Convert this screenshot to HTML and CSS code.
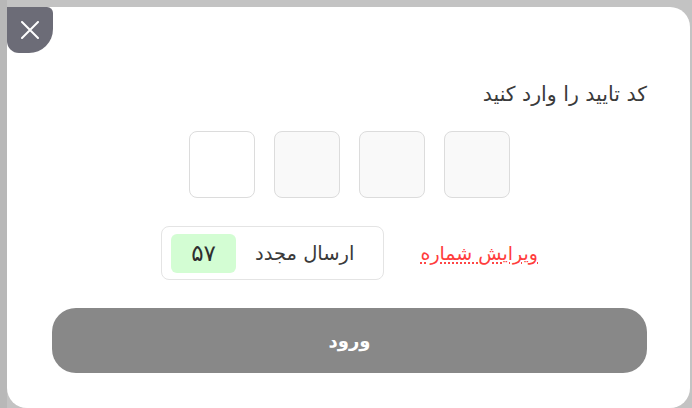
FILE: index.html
```html
<!DOCTYPE html>
<html lang="fa">
<head>
<meta charset="utf-8">
<title>ورود</title>
<link rel="stylesheet" href="styles.css">
</head>
<body>
<div class="page">
  <div class="modal">
    <button class="close" aria-label="بستن">
      <svg width="18" height="18" viewBox="0 0 18 18"><path d="M1 1 L17 17 M17 1 L1 17" stroke="#fff" stroke-width="2" stroke-linecap="round"/></svg>
    </button>
    <div class="content">
      <h2 class="title">کد تایید را وارد کنید</h2>
      <div class="otp">
        <input class="digit focus" type="text" maxlength="1">
        <input class="digit" type="text" maxlength="1">
        <input class="digit" type="text" maxlength="1">
        <input class="digit" type="text" maxlength="1">
      </div>
      <div class="actions">
        <a class="edit" href="#">ویرایش شماره</a>
        <div class="resend">
          <span class="resend-label">ارسال مجدد</span>
          <span class="timer">۵۷</span>
        </div>
      </div>
      <button class="submit">ورود</button>
    </div>
  </div>
</div>
</body>
</html>
```
FILE: styles.css
```css
* { box-sizing: border-box; }
html, body { margin: 0; padding: 0; }
body {
  background: #c3c3c3;
  font-family: "DejaVu Sans", "Noto Sans", sans-serif;
  width: 692px;
  height: 408px;
  overflow: hidden;
}
.page {
  padding: 7px 0 0 0;
  border-left: 7px solid #b8b8b8;
  height: 408px;
}
.modal {
  position: relative;
  background: #fff;
  width: 683px;
  height: 401px;
  border-radius: 0 20px 20px 20px;
}
.close {
  position: absolute;
  top: 0;
  left: 0;
  width: 46px;
  height: 46px;
  border: 0;
  padding: 0;
  background: #6c6c77;
  border-radius: 0 6px 24px 12px;
  display: flex;
  align-items: center;
  justify-content: center;
  cursor: pointer;
}
.content {
  direction: rtl;
  padding: 73px 43px 0 45px;
}
.title {
  margin: 0;
  font-size: 20.5px;
  line-height: 28px;
  font-weight: normal;
  color: #3a3a3a;
  text-align: right;
}
.otp {
  direction: ltr;
  display: flex;
  justify-content: center;
  gap: 19px;
  margin-top: 23px;
}
.digit {
  width: 66px;
  height: 67px;
  border: 1px solid #dcdcdc;
  border-radius: 8px;
  background: #f9f9f9;
  outline: none;
  text-align: center;
  font-size: 22px;
}
.digit.focus { background: #fff; }
.actions {
  display: flex;
  justify-content: center;
  align-items: center;
  gap: 36px;
  margin-top: 28px;
}
.edit {
  color: #ff3d3d;
  font-size: 19px;
  text-decoration: underline dotted #ff3d3d;
  text-underline-offset: 3px;
}
.resend {
  display: flex;
  align-items: center;
  gap: 19px;
  height: 54px;
  padding: 6px 29px 6px 9px;
  border: 1px solid #e4e4e4;
  border-radius: 8px;
}
.resend-label {
  font-size: 19.5px;
  color: #3a3a3a;
}
.timer {
  width: 65px;
  height: 39px;
  border-radius: 6px;
  background: #d3fdd3;
  display: flex;
  align-items: center;
  justify-content: center;
  font-size: 23px;
  color: #2e2e2e;
}
.submit {
  display: block;
  width: 100%;
  height: 65px;
  margin-top: 28px;
  border: 0;
  border-radius: 24px;
  background: #888888;
  color: #fff;
  font-family: "DejaVu Sans", sans-serif;
  font-weight: bold;
  font-size: 18px;
}
```
